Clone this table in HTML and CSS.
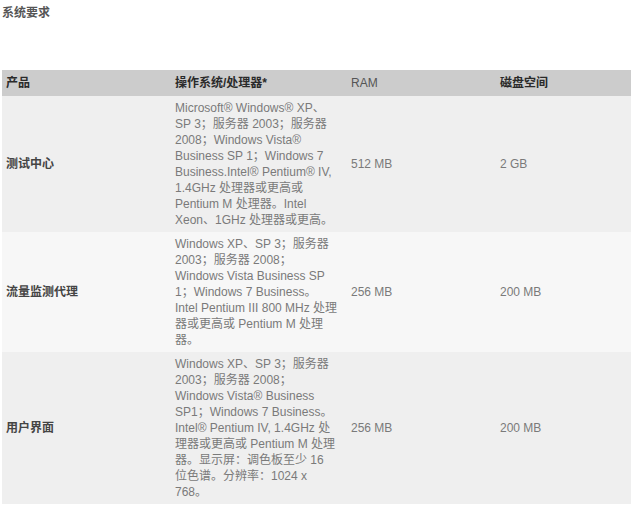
FILE: index.html
```html
<!DOCTYPE html>
<html lang="zh-CN">
<head>
<meta charset="utf-8">
<title>系统要求</title>
<link rel="stylesheet" href="styles.css">
</head>
<body>
<h3 class="title">系统要求</h3>
<table class="req">
  <colgroup>
    <col class="c1"><col class="c2"><col class="c3"><col class="c4">
  </colgroup>
  <thead>
    <tr>
      <th>产品</th>
      <th>操作系统/处理器*</th>
      <th class="latin">RAM</th>
      <th>磁盘空间</th>
    </tr>
  </thead>
  <tbody>
    <tr class="odd">
      <td class="prod">测试中心</td>
      <td class="os">Microsoft® Windows® XP、<br>SP 3；服务器 2003；服务器<br>2008；Windows Vista®<br>Business SP 1；Windows 7<br>Business.Intel® Pentium® IV,<br>1.4GHz 处理器或更高或<br>Pentium M 处理器。Intel<br>Xeon、1GHz 处理器或更高。</td>
      <td>512 MB</td>
      <td>2 GB</td>
    </tr>
    <tr class="even">
      <td class="prod">流量监测代理</td>
      <td class="os">Windows XP、SP 3；服务器<br>2003；服务器 2008；<br>Windows Vista Business SP<br>1；Windows 7 Business。<br>Intel Pentium III 800 MHz 处理<br>器或更高或 Pentium M 处理<br>器。</td>
      <td>256 MB</td>
      <td>200 MB</td>
    </tr>
    <tr class="odd">
      <td class="prod">用户界面</td>
      <td class="os">Windows XP、SP 3；服务器<br>2003；服务器 2008；<br>Windows Vista® Business<br>SP1；Windows 7 Business。<br>Intel® Pentium IV, 1.4GHz 处<br>理器或更高或 Pentium M 处理<br>器。显示屏：调色板至少 16<br>位色谱。分辨率：1024 x<br>768。</td>
      <td>256 MB</td>
      <td>200 MB</td>
    </tr>
  </tbody>
</table>
</body>
</html>
```

FILE: styles.css
```css
html, body {
  background: #ffffff;
}
body {
  margin: 0 2px;
  font-family: "Liberation Sans", Arial, "Noto Sans CJK SC", sans-serif;
  font-size: 12px;
  line-height: 16px;
  color: #777777;
}
.title {
  margin: 5px 0 0 0;
  height: 65px;
  font-size: 12px;
  line-height: 16px;
  font-weight: bold;
  color: #555555;
}
.req {
  width: 630px;
  border-collapse: collapse;
  table-layout: fixed;
}
.c1 { width: 169px; }
.c2 { width: 176px; }
.c3 { width: 149px; }
.c4 { width: 136px; }
.req th {
  background: #cccccc;
  height: 26px;
  padding: 0 4px;
  text-align: left;
  font-weight: bold;
  color: #2a2a2a;
  white-space: nowrap;
}
.req th.latin {
  font-weight: normal;
  color: #555555;
}
.req td {
  padding: 4px 4px;
  vertical-align: middle;
  color: #7a7a7a;
}
.req tr.odd td { background: #efefef; }
.req tr.even td { background: #f7f7f7; }
.req td.prod {
  font-weight: bold;
  color: #444444;
}
.req td.os {
  white-space: nowrap;
}
```
